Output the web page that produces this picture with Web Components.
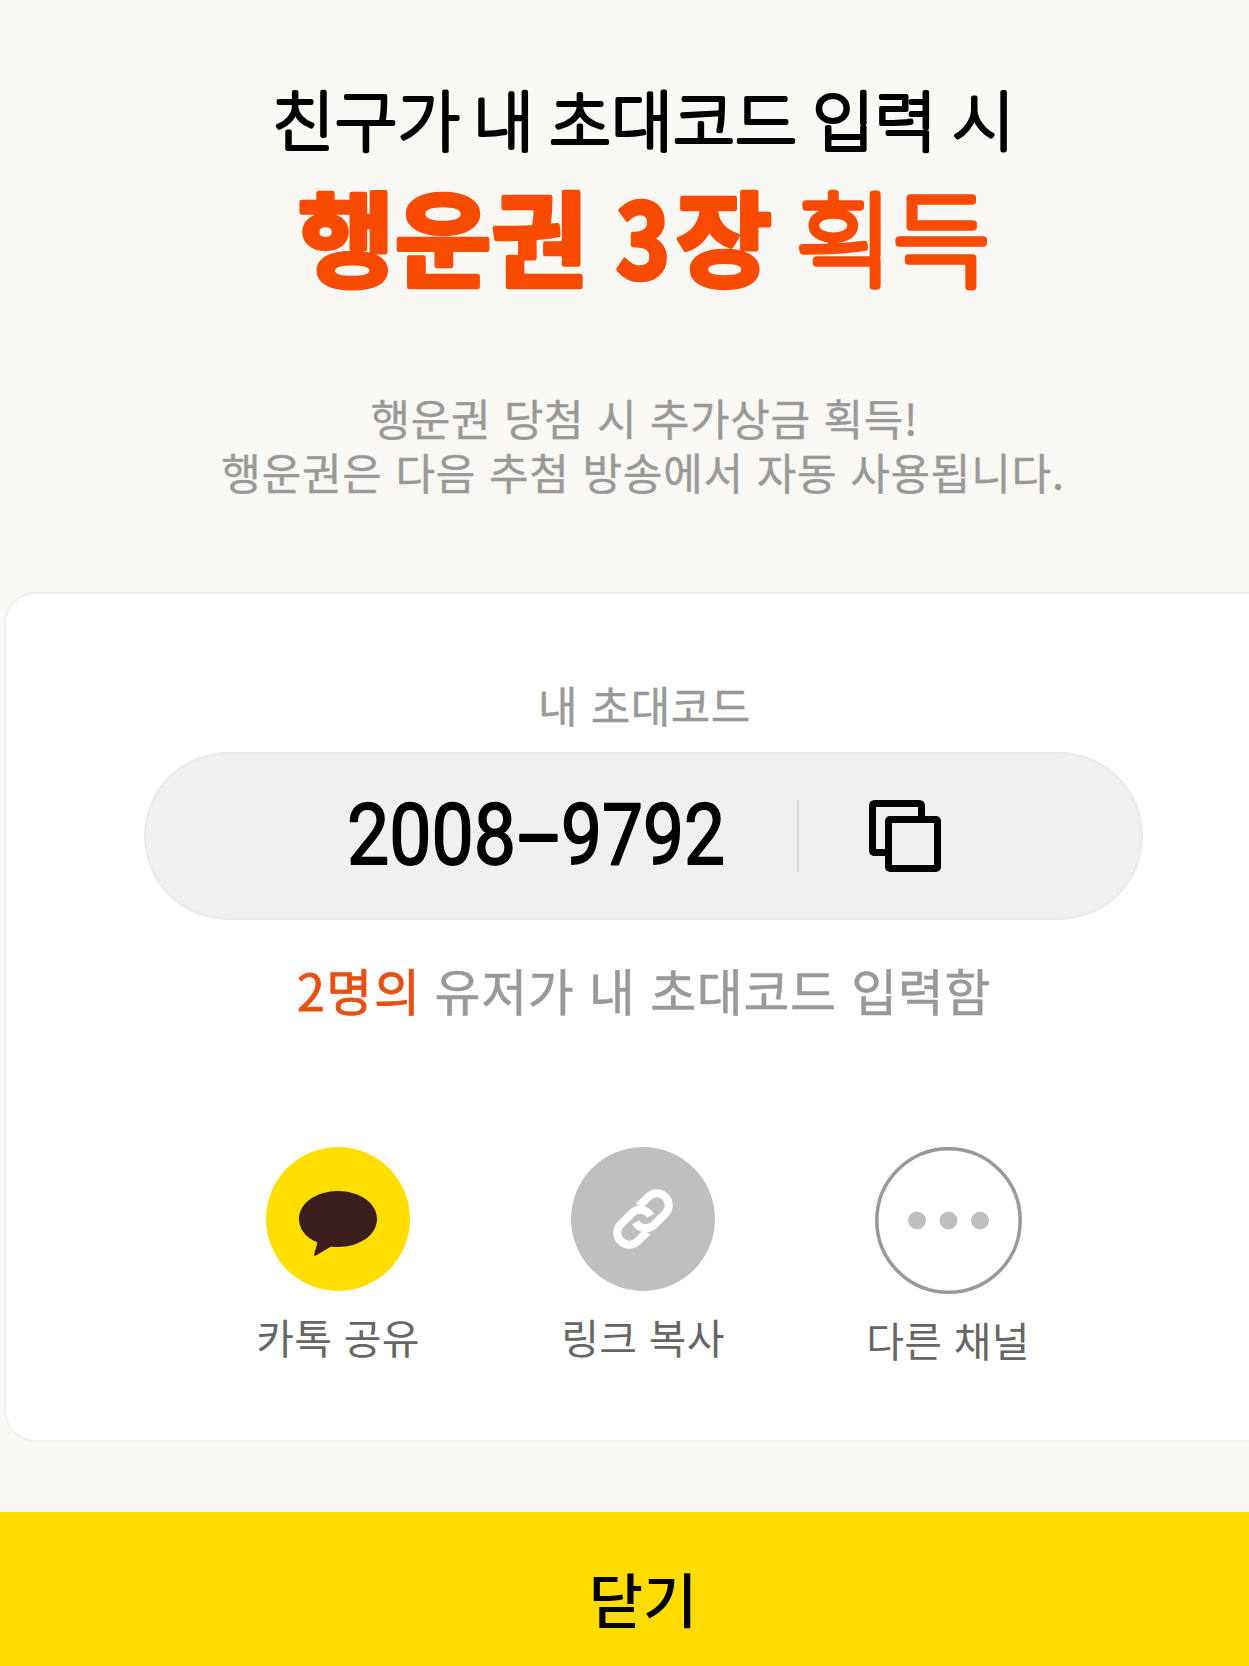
<!DOCTYPE html>
<html lang="ko">
<head>
  <meta charset="UTF-8">
  <title>초대코드</title>
  <style>
    body {
      margin: 0;
      overflow: hidden;
      background: #faf8f4;
      font-family: "Noto Sans CJK KR", sans-serif;
    }
  </style>
</head>
<body>
  <invite-page>
    <invite-title slot="head"></invite-title>
    <invite-card slot="card">
      <invite-code></invite-code>
      <invite-count><span slot="count">2명의</span>유저가 내 초대코드 입력함</invite-count>
      <share-list>
        <share-button kind="talk">카톡 공유</share-button>
        <share-button kind="link">링크 복사</share-button>
        <share-button kind="more">다른 채널</share-button>
      </share-list>
    </invite-card>
    <close-button slot="foot">닫기</close-button>
  </invite-page>

  <script>
    class InvitePage extends HTMLElement {
      constructor() {
        super();
        this.attachShadow({ mode: "open" });
        this.shadowRoot.innerHTML = `
          <style>
            :host {
              display: grid;
              grid-template-rows: 592px 850px 1fr;
              width: 1286px;
              height: 1666px;
            }
            .card { padding: 0 4px; display: grid; }
            .foot { padding-top: 70px; display: grid; }
          </style>
          <slot name="head"></slot>
          <div class="card"><slot name="card"></slot></div>
          <div class="foot"><slot name="foot"></slot></div>
        `;
      }
    }

    class InviteTitle extends HTMLElement {
      constructor() {
        super();
        this.attachShadow({ mode: "open" });
        this.shadowRoot.innerHTML = `
          <style>
            :host { display: block; text-align: center; }
            svg {
              display: block;
              font-family: "Noto Sans CJK KR", sans-serif;
              stroke-linejoin: round;
            }
            /* thin weights with a thick round stroke give the soft ends */
            .top {
              font-size: 66px;
              font-weight: 100;
              stroke: #000;
              stroke-width: 4.2px;
            }
            .bottom {
              font-size: 103px;
              fill: #f64b00;
              stroke: #f64b00;
            }
            .heavy { font-weight: 700; stroke-width: 4.5px; }
            .light { font-weight: 100; stroke-width: 7.4px; }
            p {
              margin: 0;
              font-size: 43px;
              line-height: 54px;
              letter-spacing: 0.78px;
              color: #999;
              -webkit-text-stroke: 0.4px #999;
            }
            .first { padding-top: 70px; padding-left: 3px; letter-spacing: 0.65px; }
          </style>
          <svg width="1286" height="320" viewBox="0 0 1286 320">
            <text class="top" y="145.5">
              <tspan x="272" textLength="188" lengthAdjust="spacingAndGlyphs">친구가</tspan>
              <tspan x="473" textLength="61" lengthAdjust="spacingAndGlyphs">내</tspan>
              <tspan x="549" textLength="248" lengthAdjust="spacingAndGlyphs">초대코드</tspan>
              <tspan x="812" textLength="125" lengthAdjust="spacingAndGlyphs">입력</tspan>
              <tspan x="952" textLength="63" lengthAdjust="spacingAndGlyphs">시</tspan>
            </text>
            <text class="bottom" y="279">
              <tspan class="heavy" x="298" textLength="290" lengthAdjust="spacingAndGlyphs">행운권</tspan>
              <tspan class="heavy" x="616" textLength="54" lengthAdjust="spacingAndGlyphs">3</tspan>
              <tspan class="heavy" x="676" textLength="96" lengthAdjust="spacingAndGlyphs">장</tspan>
              <tspan class="light" x="796" textLength="194" lengthAdjust="spacingAndGlyphs">획득</tspan>
            </text>
          </svg>
          <p class="first">행운권 당첨 시 추가상금 획득!</p>
          <p>행운권은 다음 추첨 방송에서 자동 사용됩니다.</p>
        `;
      }
    }

    class InviteCard extends HTMLElement {
      constructor() {
        super();
        this.attachShadow({ mode: "open" });
        this.shadowRoot.innerHTML = `
          <style>
            :host {
              box-sizing: border-box;
              display: flex;
              flex-direction: column;
              align-items: center;
              padding-top: 80px;
              border: 2px solid #efefef;
              border-radius: 32px;
              background: #fff;
            }
            h2 {
              margin: 0 0 18px;
              padding-left: 3px;
              font-size: 43px;
              font-weight: 400;
              line-height: 60px;
              letter-spacing: 0.5px;
              color: #999;
              -webkit-text-stroke: 0.4px #999;
            }
          </style>
          <h2>내 초대코드</h2>
          <slot></slot>
        `;
      }
    }

    class InviteCode extends HTMLElement {
      constructor() {
        super();
        this.attachShadow({ mode: "open" });
        this.shadowRoot.innerHTML = `
          <style>
            :host {
              box-sizing: border-box;
              display: flex;
              align-items: center;
              width: 999px;
              height: 168px;
              padding-left: 197px;
              border: 2px solid #e9e9e9;
              border-radius: 84px;
              background: #f0f0f0;
            }
            .code {
              font-family: Roboto, sans-serif;
              font-size: 86px;
              stroke: #000;
              stroke-width: 1.8px;
              stroke-linejoin: round;
            }
            .line { width: 2px; height: 72px; margin: 0 70px 0 40px; background: #d8d8d8; }
          </style>
          <svg class="code" width="414" height="160" viewBox="343 756 414 160">
            <text y="864"><tspan x="347" textLength="169" lengthAdjust="spacingAndGlyphs">2008</tspan><tspan x="518" textLength="41" lengthAdjust="spacingAndGlyphs">-</tspan><tspan x="561" textLength="164" lengthAdjust="spacingAndGlyphs">9792</tspan></text>
          </svg>
          <div class="line"></div>
          <svg width="72" height="72" fill="none" stroke="#000" stroke-width="7">
            <path d="M16 52.5H6Q3.5 52.5 3.5 50V6Q3.5 3.5 6 3.5H50Q52.5 3.5 52.5 6V17"/>
            <rect x="19.5" y="19.5" width="49" height="49" rx="1.5"/>
          </svg>
        `;
      }
    }

    class InviteCount extends HTMLElement {
      constructor() {
        super();
        this.attachShadow({ mode: "open" });
        this.shadowRoot.innerHTML = `
          <style>
            :host {
              display: flex;
              gap: 13px;
              margin-top: 31px;
              padding-left: 2px;
              font-size: 50px;
              line-height: 76px;
              letter-spacing: 0.6px;
              color: #999;
              -webkit-text-stroke: 0.5px #999;
            }
            .count {
              color: #e65113;
              letter-spacing: 1.6px;
              -webkit-text-stroke: 0.8px #e65113;
            }
          </style>
          <span class="count"><slot name="count"></slot></span>
          <span><slot></slot></span>
        `;
      }
    }

    class ShareList extends HTMLElement {
      constructor() {
        super();
        this.attachShadow({ mode: "open" });
        this.shadowRoot.innerHTML = `
          <style>
            :host {
              display: grid;
              grid-template-columns: repeat(3, 305px);
              margin-top: 120px;
            }
          </style>
          <slot></slot>
        `;
      }
    }

    const shareIcons = {
      talk: `
        <svg width="144" height="144">
          <circle cx="72" cy="72" r="72" fill="#ffde00"/>
          <path fill="#3c1e1e" d="M72 44C93.500 44 111 56 111 72S93.500 100 72 100Q68 100 65 99.500L50 108.500Q48 109.500 48 107.500L51.500 95.500C40 91 33 82 33 72C33 56 50.500 44 72 44Z"/>
        </svg>`,
      link: `
        <svg width="144" height="144">
          <circle cx="72" cy="72" r="72" fill="#bfbfbf"/>
          <g fill="none" stroke="#fff" stroke-width="8" transform="rotate(-45 72 72)">
            <path d="M63 84H52.600A12 12 0 0 1 52.600 60H68A12 12 0 0 1 79.600 75"/>
            <path d="M81 60H91.400A12 12 0 0 1 91.400 84H76A12 12 0 0 1 64.400 69"/>
            <path fill="#fff" stroke="none" d="M62 80H64L66.500 88H62ZM82 64H80L77.500 56H82Z"/>
          </g>
        </svg>`,
      more: `
        <svg width="147" height="147">
          <circle cx="73.500" cy="73.500" r="71.700" fill="none" stroke="#999" stroke-width="3.500"/>
          <g fill="#bfbfbf">
            <circle cx="42" cy="73.500" r="9"/>
            <circle cx="73.500" cy="73.500" r="9"/>
            <circle cx="105" cy="73.500" r="9"/>
          </g>
        </svg>`
    };

    class ShareButton extends HTMLElement {
      constructor() {
        super();
        this.attachShadow({ mode: "open" });
      }

      connectedCallback() {
        this.shadowRoot.innerHTML = `
          <style>
            :host {
              display: flex;
              flex-direction: column;
              align-items: center;
              font-size: 41px;
              line-height: 60px;
              letter-spacing: 0.2px;
              color: #666;
            }
            svg { display: block; margin-bottom: 15px; }
          </style>
          ${shareIcons[this.getAttribute("kind")]}
          <slot></slot>
        `;
      }
    }

    class CloseButton extends HTMLElement {
      constructor() {
        super();
        this.attachShadow({ mode: "open" });
        this.shadowRoot.innerHTML = `
          <style>
            :host {
              display: block;
              padding-top: 46px;
              background: #ffdc00;
              text-align: center;
              font-size: 59px;
              font-weight: 500;
              line-height: 80px;
              color: #000;
            }
          </style>
          <slot></slot>
        `;
      }
    }

    customElements.define("invite-page", InvitePage);
    customElements.define("invite-title", InviteTitle);
    customElements.define("invite-card", InviteCard);
    customElements.define("invite-code", InviteCode);
    customElements.define("invite-count", InviteCount);
    customElements.define("share-list", ShareList);
    customElements.define("share-button", ShareButton);
    customElements.define("close-button", CloseButton);
  </script>
</body>
</html>
